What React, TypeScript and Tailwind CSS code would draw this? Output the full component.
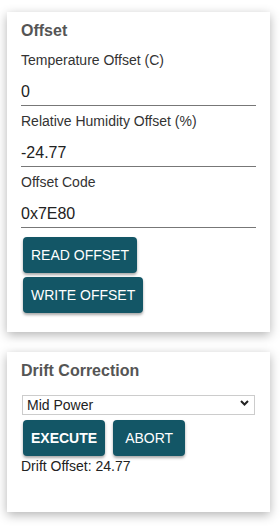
import { useState } from 'react'

const font = { fontFamily: '"Liberation Sans", Arial, sans-serif' }

function Field({ label, value }: { label: string; value: string }) {
    const [val, setVal] = useState(value)
    return (
        <div className="flex flex-col">
            <label className="text-[14px] leading-[16px] text-[#333]">{label}</label>
            <input
                value={val}
                onChange={(e) => setVal(e.target.value)}
                className="mt-[10px] mb-[7px] h-[28px] w-full border-b border-[#777] bg-transparent text-[16px] leading-[18px] text-[#222] outline-none"
            />
        </div>
    )
}

function Button({ children, bold, className }: { children: string; bold?: boolean; className?: string }) {
    return (
        <button
            className={
                'h-[36px] rounded-[4px] bg-[#135666] text-[14px] uppercase text-white shadow-[0_2px_3px_rgba(0,0,0,0.35)] ' +
                (bold ? 'font-bold ' : '') +
                (className ?? 'px-2')
            }
        >
            {children}
        </button>
    )
}

function App() {
    const [mode, setMode] = useState('Mid Power')

    return (
        <div className="min-h-screen bg-white pl-[7px] pt-[12px] pb-4" style={font}>
            <div className="flex w-[263px] flex-col gap-[20px]">
                <div className="flex flex-col bg-white px-[14px] pt-[10px] pb-[19px] shadow-[0_3px_10px_rgba(0,0,0,0.3)]">
                    <h2 className="mb-[12px] text-[16px] leading-[18px] font-bold text-[#555]">Offset</h2>
                    <Field label="Temperature Offset (C)" value="0" />
                    <Field label="Relative Humidity Offset (%)" value="-24.77" />
                    <Field label="Offset Code" value="0x7E80" />
                    <div className="mt-[2px] flex flex-col items-start gap-[4px] pl-[2px]">
                        <Button>READ OFFSET</Button>
                        <Button>WRITE OFFSET</Button>
                    </div>
                </div>

                <div className="flex h-[160px] flex-col bg-white px-[14px] pt-[10px] shadow-[0_3px_10px_rgba(0,0,0,0.3)]">
                    <h2 className="mb-[13px] text-[16px] leading-[18px] font-bold text-[#555]">Drift Correction</h2>
                    <div className="relative ml-[1px] w-[233px]">
                        <select
                            value={mode}
                            onChange={(e) => setMode(e.target.value)}
                            className="h-[20px] w-full appearance-none border border-[#ccc] bg-white pl-[4px] text-[14px] leading-[16px] text-[#222] outline-none"
                        >
                            <option>Low Power</option>
                            <option>Mid Power</option>
                            <option>High Power</option>
                        </select>
                        <svg
                            className="pointer-events-none absolute right-[6px] top-[7px]"
                            width="9"
                            height="6"
                            viewBox="0 0 9 6"
                        >
                            <path d="M1 1 L4.5 4.5 L8 1" fill="none" stroke="#222" strokeWidth="2" />
                        </svg>
                    </div>
                    <div className="mt-[3px] flex gap-[8px] pl-[2px]">
                        <Button bold>EXECUTE</Button>
                        <Button className="px-3">ABORT</Button>
                    </div>
                    <p className="mt-[2px] text-[14px] leading-[16px] text-[#222]">Drift Offset: 24.77</p>
                </div>
            </div>
        </div>
    )
}

export default App
